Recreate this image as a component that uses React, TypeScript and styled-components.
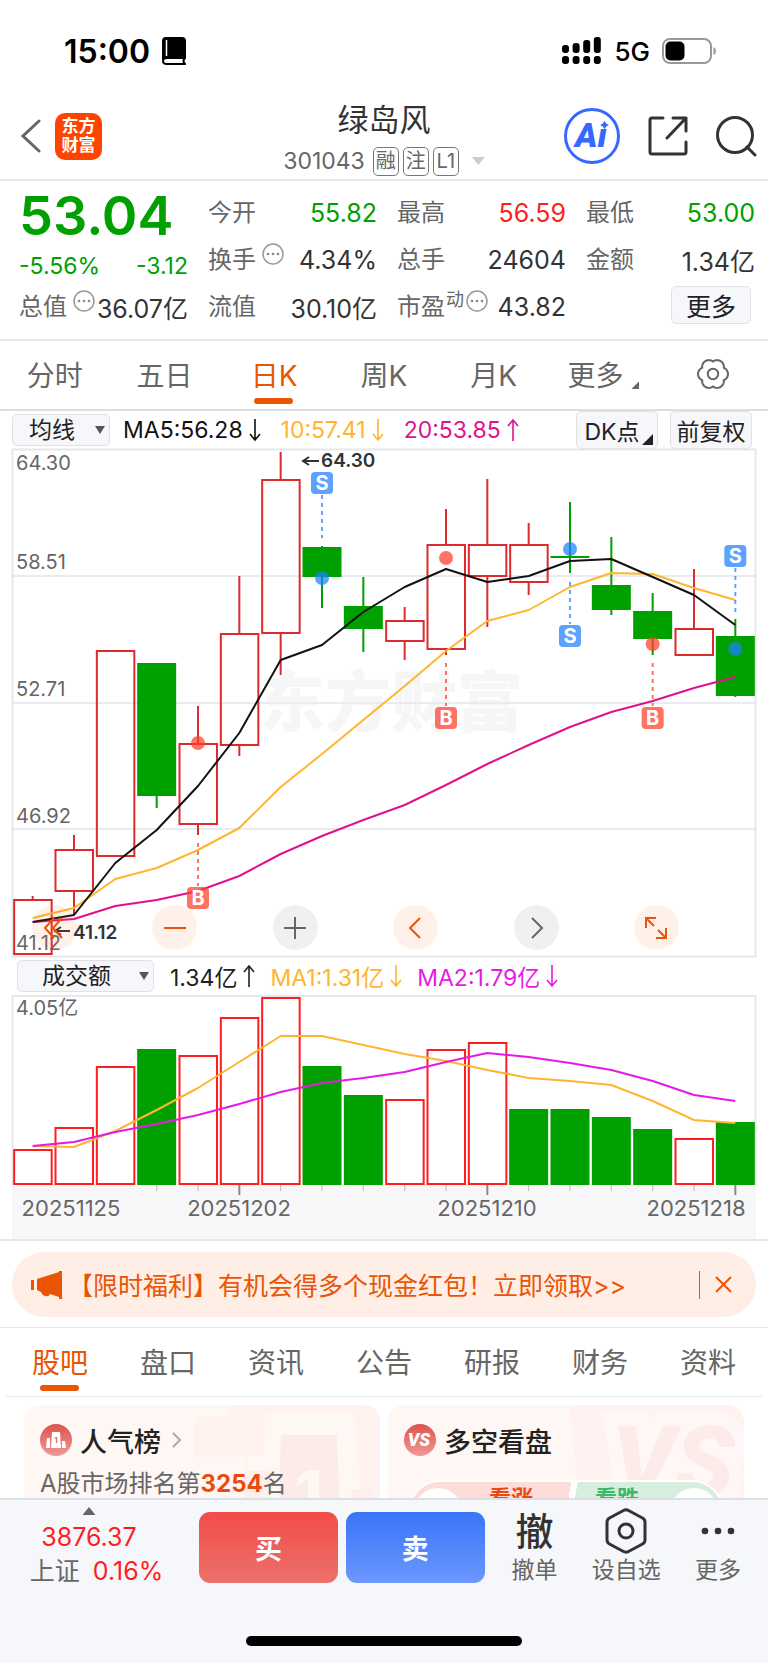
import React from 'react';
import styled, { createGlobalStyle, css } from 'styled-components';

const C = {
  orange: '#ea5504',
  green: '#00a000',
  red: '#ff1e1e',
  candle: '#dc2a2d',
  volume: '#ff1e1e',
  ink: '#222',
  dark: '#333',
  gray: '#666',
  line: '#e6e7ea',
  panel: '#f6f7fa',
  amber: '#ffb52e',
  pink: '#e0128a',
  magenta: '#e61ae6',
  sell: '#1e80ff',
  buy: '#ff3e28',
};

const GlobalStyle = createGlobalStyle`
  * { box-sizing: border-box; }
  body {
    margin: 0;
    background: #fff;
    color: ${C.dark};
    font-family: Inter, "Noto Sans CJK SC", sans-serif;
  }
  button, select { font: inherit; color: inherit; margin: 0; padding: 0; }
  button { border: 0; background: none; cursor: pointer; }
  a { color: inherit; text-decoration: none; }
  svg { display: block; }
  h1, h2, p, dl, dd, dt { margin: 0; font-weight: 400; }
`;

const Screen = styled.div`
  display: flex;
  flex-direction: column;
  height: 100vh;
`;

const Content = styled.main`
  flex: 1;
  min-height: 0;
  overflow: hidden;
`;

/* ---------- status bar ---------- */

const StatusBar = styled.div`
  display: flex;
  align-items: center;
  justify-content: space-between;
  height: 92px;
  padding: 10px 51px 0 64px;
  color: #000;
`;

const StatusGroup = styled.div<{ $size: number; $weight: number }>`
  display: flex;
  align-items: center;
  gap: 12px;
  font-size: ${(p) => p.$size}px;
  font-weight: ${(p) => p.$weight};
`;

/* ---------- header ---------- */

const Header = styled.header`
  display: grid;
  grid-template-columns: 1fr auto 1fr;
  align-items: center;
  height: 89px;
  padding: 0 11px;
  border-bottom: 2px solid ${C.line};
`;

const HeaderSide = styled.div<{ $end?: boolean }>`
  display: flex;
  align-items: center;
  gap: ${(p) => (p.$end ? 28 : 13)}px;
  padding-left: ${(p) => (p.$end ? 0 : 9)}px;
  justify-content: ${(p) => (p.$end ? 'flex-end' : 'flex-start')};
`;

const Logo = styled.a`
  display: grid;
  place-content: center;
  width: 47px;
  height: 47px;
  border-radius: 10px;
  background: #ff4400;
  color: #fff;
  font-size: 17px;
  font-weight: 700;
  line-height: 19px;
`;

const TitleBlock = styled.div`
  display: flex;
  flex-direction: column;
  align-items: center;
  padding-top: 6px;
`;

const StockName = styled.h1`
  font-size: 31px;
  line-height: 44px;
`;

const CodeLine = styled.div`
  display: flex;
  align-items: center;
  gap: 4px;
  height: 38px;
  font-size: 23px;
  color: ${C.gray};
`;

const Code = styled.span`
  margin-right: 4px;
`;

const Badge = styled.span`
  width: 26px;
  height: 29px;
  border: 1px solid #777;
  border-radius: 5px;
  font-size: 20px;
  line-height: 27px;
  text-align: center;
`;

const Triangle = styled.i<{ $dir: 'down' | 'up' | 'corner'; $size: number; $color: string }>`
  flex: none;
  width: ${(p) => p.$size}px;
  height: ${(p) => (p.$dir === 'corner' ? p.$size : Math.round(p.$size * 0.6))}px;
  background: ${(p) => p.$color};
  clip-path: ${(p) =>
    p.$dir === 'down'
      ? 'polygon(0 0, 100% 0, 50% 100%)'
      : p.$dir === 'up'
        ? 'polygon(50% 0, 100% 100%, 0 100%)'
        : 'polygon(100% 0, 100% 100%, 0 100%)'};
`;

const CodeTriangle = styled(Triangle)`
  margin-left: 9px;
`;

/* ---------- quote panel ---------- */

const Quote = styled.section`
  display: grid;
  grid-template-columns: repeat(4, 1fr);
  column-gap: 20px;
  height: 160px;
  padding: 8px 13px 0 19px;
  border-bottom: 2px solid ${C.line};
`;

const QuoteColumn = styled.dl`
  display: flex;
  flex-direction: column;
`;

const Price = styled.dd`
  color: ${C.green};
  font-size: 54px;
  font-weight: 600;
  line-height: 54px;
`;

const Change = styled.dd`
  display: flex;
  align-items: flex-end;
  justify-content: space-between;
  height: 40px;
  color: ${C.green};
  font-size: 23px;
  line-height: 34px;
`;

const QuoteCell = styled.div`
  display: flex;
  align-items: center;
  justify-content: space-between;
  height: 47px;
  white-space: nowrap;
`;

const QuoteLabel = styled.dt`
  display: flex;
  align-items: flex-start;
  gap: 6px;
  color: ${C.gray};
  font-size: 24px;
  line-height: 34px;
`;

const Sup = styled.sup`
  margin: 0 -4px 0 -5px;
  font-size: 18px;
  line-height: 20px;
`;

const QuoteValue = styled.dd<{ $color?: string }>`
  color: ${(p) => p.$color ?? C.dark};
  font-size: 25px;
`;

const SoftButton = styled.button`
  display: flex;
  align-items: center;
  justify-content: center;
  height: 38px;
  border: 1px solid #dfe1e6;
  border-radius: 5px;
  background: ${C.panel};
  color: ${C.ink};
  font-size: 23px;
  white-space: nowrap;
`;

const MoreButton = styled(SoftButton)`
  width: 80px;
  margin: 3px 4px 0 auto;
  font-size: 25px;
`;

/* ---------- tabs ---------- */

const Tabs = styled.nav<{ $tall?: boolean }>`
  display: grid;
  grid-template-columns: repeat(7, 1fr);
  height: ${(p) => (p.$tall ? 70 : 69)}px;
  margin: ${(p) => (p.$tall ? '0' : '0 6px')};
  border-bottom: ${(p) => (p.$tall ? 2 : 1)}px solid ${(p) => (p.$tall ? '#dcdee3' : C.line)};
`;

const Tab = styled.button<{ $active?: boolean }>`
  position: relative;
  display: flex;
  align-items: center;
  justify-content: center;
  gap: 8px;
  padding-bottom: 2px;
  color: ${(p) => (p.$active ? C.orange : C.gray)};
  font-size: 28px;
  white-space: nowrap;
  ${(p) =>
    p.$active &&
    css`
      &::after {
        content: '';
        position: absolute;
        left: 50%;
        bottom: 5px;
        width: 39px;
        height: 6px;
        margin-left: -20px;
        border-radius: 3px;
        background: ${C.orange};
      }
    `}
`;

const TabTriangle = styled(Triangle)`
  align-self: flex-end;
  margin-bottom: 18px;
`;

/* ---------- indicators ---------- */

const IndicatorRow = styled.div`
  display: flex;
  align-items: center;
  gap: 13px;
  height: 38px;
  padding: 0 16px 0 12px;
  font-size: 23px;
  white-space: nowrap;
`;

const VolumeRow = styled(IndicatorRow)`
  gap: 16px;
  padding-left: 17px;
`;

const SelectBox = styled.div<{ $width: number }>`
  position: relative;
  width: ${(p) => p.$width}px;
  height: 32px;
  select {
    appearance: none;
    width: 100%;
    height: 100%;
    padding: 0 18px 0 0;
    border: 1px solid #dfe1e6;
    border-radius: 5px;
    background: ${C.panel};
    color: ${C.ink};
    font-size: 23px;
    line-height: 28px;
    text-align: center;
    text-align-last: center;
  }
`;

const SelectTriangle = styled(Triangle)`
  position: absolute;
  right: 5px;
  top: 12px;
  height: 8px;
`;

const Legends = styled.div<{ $gap: number }>`
  display: flex;
  gap: ${(p) => p.$gap}px;
`;

const Legend = styled.span<{ $color: string }>`
  display: flex;
  align-items: center;
  gap: 6px;
  color: ${(p) => p.$color};
`;

const ButtonPair = styled.div`
  display: flex;
  gap: 12px;
  margin-left: auto;
  button { width: 82px; }
`;

const DkButton = styled(SoftButton)`
  position: relative;
  padding-right: 10px;
`;

const DkTriangle = styled(Triangle)`
  position: absolute;
  right: 4px;
  bottom: 3px;
`;

/* ---------- charts ---------- */

const ChartFrame = styled.div`
  position: relative;
  margin: 0 12px;
  background: #fff;
  > svg { width: 100%; height: auto; overflow: visible; }
`;

const ChartTools = styled.div`
  position: absolute;
  left: 0;
  right: 0;
  bottom: 7px;
  display: flex;
  justify-content: space-between;
  padding: 0 77px 0 20px;
`;

const Tool = styled.button<{ $muted?: boolean }>`
  display: grid;
  place-items: center;
  width: 45px;
  height: 45px;
  border-radius: 50%;
  background: ${(p) => (p.$muted ? 'rgba(0,0,0,.06)' : 'rgba(255,100,20,.09)')};
  color: ${(p) => (p.$muted ? C.gray : C.orange)};
  svg { width: 24px; height: 24px; }
`;

/* ---------- banner ---------- */

const BannerArea = styled.section`
  padding: 11px 12px 10px;
  border-top: 2px solid ${C.line};
  border-bottom: 1px solid ${C.line};
`;

const Banner = styled.div`
  display: flex;
  align-items: center;
  height: 65px;
  padding: 0 17px 0 19px;
  border-radius: 33px;
  background: #feeee6;
  color: ${C.orange};
  font-size: 25px;
`;

const BannerLink = styled.a`
  flex: 1;
  margin-left: 6px;
  padding-bottom: 2px;
  white-space: nowrap;
`;

const CloseButton = styled.button`
  display: flex;
  align-items: center;
  height: 28px;
  padding: 0 7px 0 15px;
  border-left: 1px solid ${C.orange};
`;

/* ---------- cards ---------- */

const Cards = styled.section`
  display: grid;
  grid-template-columns: 1fr 1fr;
  gap: 8px;
  padding: 8px 24px 24px;
`;

const Card = styled.article`
  position: relative;
  height: 200px;
  padding: 15px 16px;
  border-radius: 16px;
  overflow: hidden;
  background: #fff7f4;
`;

const CardArt = styled.svg`
  position: absolute;
  right: 0;
  top: 0;
`;

const CardHead = styled.h2`
  position: relative;
  display: flex;
  align-items: center;
  gap: 8px;
  height: 40px;
  color: ${C.ink};
  font-size: 27px;
  font-weight: 500;
`;

const RankLine = styled.p`
  position: relative;
  color: ${C.gray};
  font-size: 24px;
  line-height: 48px;
  b { color: #ea4a12; font-weight: 700; }
`;

const Versus = styled.div`
  position: relative;
  display: grid;
  grid-template-columns: 1fr 1fr;
  height: 64px;
  margin: 20px 4px;
  border: 2px solid #fff;
  border-radius: 32px;
  overflow: hidden;
  background: linear-gradient(100deg, #fddcda 50%, #fff 50%, #fff 52%, #d6efdc 52%);
  font-size: 22px;
  font-weight: 700;
  line-height: 32px;
`;

const Side = styled.button<{ $color: string; $end?: boolean }>`
  position: relative;
  color: ${(p) => p.$color};
  text-align: ${(p) => (p.$end ? 'left' : 'right')};
  padding: ${(p) => (p.$end ? '0 0 28px 29px' : '0 33px 28px 0')};
  &::before {
    content: '';
    position: absolute;
    top: 6px;
    ${(p) => (p.$end ? 'right' : 'left')}: 4px;
    width: 48px;
    height: 48px;
    border-radius: 50%;
    background: #fff;
  }
`;

/* ---------- bottom bar ---------- */

const BottomBar = styled.footer`
  border-top: 2px solid #dcdfe4;
  background: ${C.panel};
`;

const Actions = styled.div`
  display: flex;
  gap: 8px;
  height: 94px;
`;

const IndexBlock = styled.a`
  flex: 0 0 191px;
  display: flex;
  flex-direction: column;
  align-items: center;
  padding: 7px 13px 0 0;
  color: ${C.red};
  font-size: 25px;
  line-height: 34px;
  white-space: nowrap;
`;

const IndexTriangle = styled(Triangle)`
  margin-bottom: 5px;
`;

const IndexLine = styled.span`
  display: flex;
  gap: 13px;
  padding-left: 15px;
  span { color: ${C.gray}; }
`;

const TradeButton = styled.button<{ $from: string; $to: string }>`
  flex: 139;
  height: 71px;
  margin-top: 12px;
  border-radius: 11px;
  background: linear-gradient(${(p) => p.$from}, ${(p) => p.$to});
  color: #fff;
  font-size: 27px;
  font-weight: 700;
`;

const Shortcuts = styled.div`
  flex: 276;
  display: grid;
  grid-template-columns: repeat(3, 1fr);
`;

const Shortcut = styled.button`
  display: flex;
  flex-direction: column;
  align-items: center;
  padding-top: 7px;
  padding-right: 8px;
  color: ${C.gray};
  font-size: 23px;
  line-height: 32px;
  white-space: nowrap;
`;

const ShortcutIcon = styled.span`
  display: grid;
  place-items: center;
  height: 47px;
  color: ${C.dark};
  font-size: 38px;
  font-weight: 500;
`;

const HomeIndicator = styled.div`
  width: 36%;
  height: 10px;
  margin: 42px auto 17px;
  border-radius: 5px;
  background: #000;
`;

/* ---------- chart data ---------- */

const STEP = 744 / 18;
const cx = (i: number) => STEP * (i + 0.5);

type Candle = [top: number, bottom: number, high: number, low: number, up: boolean];
const candles: Candle[] = [
  [450, 506, 447, 506, true],
  [400, 443, 386, 466, true],
  [201, 408, 201, 408, true],
  [214, 347, 214, 359, false],
  [294, 376, 257, 386, true],
  [184, 297, 127, 307, true],
  [30, 185, 3, 226, true],
  [98, 128, 97, 159, false],
  [157, 180, 128, 203, false],
  [171, 193, 158, 211, true],
  [95, 201, 60, 206, true],
  [95, 128, 30, 178, true],
  [95, 134, 74, 146, true],
  [107, 109, 53, 124, false],
  [136, 161, 88, 166, false],
  [162, 190, 144, 206, false],
  [179, 207, 120, 207, true],
  [187, 247, 170, 248, false],
];
const ma5 = [473, 466, 414, 381, 337, 284, 211, 196, 163, 138, 120, 133, 127, 112, 110, 128, 146, 176];
const ma10 = [469, 459, 430, 419, 401, 379, 338, 305, 271, 237, 202, 172, 161, 138, 124, 125, 139, 151];
const ma20 = [473, 470, 457, 451, 442, 427, 405, 387, 371, 356, 336, 315, 296, 278, 263, 252, 239, 228];

const signals = [
  { i: 4, kind: 'B', badge: 449, from: 394, to: 437, dot: 294 },
  { i: 7, kind: 'S', badge: 34, from: 46, to: 89, dot: 129 },
  { i: 10, kind: 'B', badge: 269, from: 214, to: 257, dot: 109 },
  { i: 13, kind: 'S', badge: 187, from: 133, to: 175, dot: 100 },
  { i: 15, kind: 'B', badge: 269, from: 214, to: 257, dot: 195 },
  { i: 17, kind: 'S', badge: 107, from: 119, to: 163, dot: 200 },
];

const volumes = [154, 132, 71, 54, 60, 22, 2, 71, 100, 104, 54, 47, 114, 114, 122, 134, 143, 127];
const fallingVolume = new Set([3, 7, 8, 12, 13, 14, 15, 17]);
const vma1 = [151, 152, 136, 115, 93, 67, 41, 41, 50, 59, 66, 75, 83, 86, 90, 106, 125, 128];
const vma2 = [151, 147, 137, 129, 120, 109, 97, 88, 83, 77, 67, 58, 62, 68, 75, 86, 100, 106];

const points = (ys: number[]) => ys.map((y, i) => `${cx(i).toFixed(1)},${y}`).join(' ');

const Line = ({ ys, color }: { ys: number[]; color: string }) => (
  <polyline points={points(ys)} fill="none" stroke={color} strokeWidth={2} strokeLinejoin="round" />
);

const PriceChart = () => (
  <svg viewBox="0 0 744 508" role="img" aria-label="日K线图">
    <text x="379" y="277" fontSize="66" fontWeight="900" fill="#f6f6f7" textAnchor="middle">东方财富</text>
    {[127, 254, 380].map((y) => (
      <path key={y} d={`M0 ${y}H744`} stroke="#e9ebf1" strokeWidth="2" />
    ))}
    <rect x="0.5" y="0.5" width="743" height="507" fill="none" stroke={C.line} strokeWidth="2" />
    {[['64.30', 21], ['58.51', 120], ['52.71', 247], ['46.92', 374], ['41.12', 501]].map(([t, y]) => (
      <text key={t} x="4" y={y} fontSize="20" fill={C.gray}>{t}</text>
    ))}
    {candles.map(([top, bottom, high, low, up], i) => {
      const color = up ? C.candle : C.green;
      return (
        <g key={i} stroke={color} strokeWidth="2">
          <path d={`M${cx(i)} ${high}V${top}M${cx(i)} ${bottom}V${low}`} />
          {up ? (
            <rect x={cx(i) - 18.5} y={top + 1} width="37.5" height={bottom - top - 2} fill="none" />
          ) : (
            <rect x={cx(i) - 19.5} y={top} width="39" height={bottom - top} fill={color} stroke="none" />
          )}
        </g>
      );
    })}
    <Line ys={ma20} color={C.pink} />
    <Line ys={ma10} color={C.amber} />
    <Line ys={ma5} color="#111" />
    {signals.map((s) => {
      const color = s.kind === 'S' ? C.sell : C.buy;
      const x = cx(s.i);
      return (
        <g key={s.i}>
          <g opacity="0.72">
            <path d={`M${x} ${s.from}V${s.to}`} stroke={color} strokeWidth="2" strokeDasharray="4 4" />
            <circle cx={x} cy={s.dot} r="7" fill={color} />
            <rect x={x - 11} y={s.badge - 11} width="22" height="22" rx="4" fill={color} />
          </g>
          <text x={x} y={s.badge + 7} fontSize="20" fontWeight="700" fill="#fff" textAnchor="middle">{s.kind}</text>
        </g>
      );
    })}
    <path d="M291 12H307M297 8L291 12L297 16" fill="none" stroke={C.dark} strokeWidth="2" />
    <text x="309" y="18" fontSize="19" fontWeight="600" fill={C.dark}>64.30</text>
    <path d="M43 482H58M49 478L43 482L49 486" fill="none" stroke={C.dark} strokeWidth="2" />
    <text x="61" y="490" fontSize="19" fontWeight="600" fill={C.dark}>41.12</text>
  </svg>
);

const VolumeChart = () => (
  <svg viewBox="0 0 744 244" role="img" aria-label="成交额图">
    <rect x="0" y="190" width="744" height="54" fill="#f7f7fa" />
    <path d="M0.5 190V1H743.5V190" fill="none" stroke={C.line} strokeWidth="2" />
    <text x="4" y="20" fontSize="20" fill={C.gray}>4.05亿</text>
    {volumes.map((top, i) =>
      fallingVolume.has(i) ? (
        <rect key={i} x={cx(i) - 19.5} y={top} width="39" height={190 - top} fill={C.green} />
      ) : (
        <rect key={i} x={cx(i) - 18.5} y={top + 1} width="37.5" height={188 - top} fill="none" stroke={C.volume} strokeWidth="2" />
      ),
    )}
    <Line ys={vma1} color={C.amber} />
    <Line ys={vma2} color={C.magenta} />
    {volumes.map((_, i) => {
      const major = i % 6 === 5;
      return i < 3 ? null : (
        <path key={i} d={`M${cx(i)} 190V${major ? 200 : 196}`} stroke={major ? '#888' : '#bbb'} strokeWidth={major ? 2 : 1} />
      );
    })}
    {[['20251125', 59], ['20251202', 227], ['20251210', 475], ['20251218', 684]].map(([t, x]) => (
      <text key={t} x={x} y="221" fontSize="22" fill={C.gray} textAnchor="middle">{t}</text>
    ))}
  </svg>
);

/* ---------- icons ---------- */

const Arrow = ({ up }: { up?: boolean }) => (
  <svg width="12" height="24" viewBox="0 0 12 24" fill="none" stroke="currentColor" strokeWidth="1.6">
    {up ? <path d="M6 23V2M1 8L6 2L11 8" /> : <path d="M6 1V22M1 16L6 22L11 16" />}
  </svg>
);

const Info = () => (
  <svg width="22" height="22" viewBox="0 0 22 22" aria-hidden="true">
    <circle cx="11" cy="11" r="10" fill="none" stroke="#999" strokeWidth="1.5" />
    <g fill="#888">
      <circle cx="6" cy="11" r="1.3" />
      <circle cx="11" cy="11" r="1.3" />
      <circle cx="16" cy="11" r="1.3" />
    </g>
  </svg>
);

const gearPath = (() => {
  const pts: string[] = [];
  for (let a = 0; a < 360; a += 5) {
    const t = (a * Math.PI) / 180;
    const r = 12.4 + 2.6 * Math.pow(Math.abs(Math.cos(3 * t)), 0.8);
    pts.push(`${(16 + r * Math.cos(t)).toFixed(2)} ${(16 + r * Math.sin(t)).toFixed(2)}`);
  }
  return `M${pts.join('L')}Z`;
})();

const Gear = () => (
  <svg width="32" height="32" viewBox="0 0 32 32" fill="none" stroke={C.gray} strokeWidth="2">
    <path d={gearPath} strokeLinejoin="round" />
    <circle cx="16" cy="16" r="5.2" />
  </svg>
);

const signalBars = [8, 10, 13, 16];

const App = () => (
  <>
    <GlobalStyle />
    <Screen>
      <Content>
        <StatusBar>
          <StatusGroup $size={32} $weight={600}>
            15:00
            <svg width="24" height="28" viewBox="0 0 24 28">
              <path d="M4 0H20Q24 0 24 4V21H5Q0 21 0 24V4Q0 0 4 0Z" />
              <path d="M4.500 3V19" stroke="#fff" strokeWidth="1.500" />
              <path d="M23 21H5Q1 21 1 24T5 27H23Q20 24 23 21Z" fill="#fff" stroke="#000" strokeWidth="2" />
            </svg>
          </StatusGroup>
          <StatusGroup $size={26} $weight={500}>
            <svg width="40" height="28" viewBox="0 0 40 28">
              {signalBars.map((h, i) => (
                <g key={h}>
                  <rect x={i * 10.6} y={16 - h} width="7" height={h} rx="3" />
                  <rect x={i * 10.6} y="19" width="7" height="8" rx="3" />
                </g>
              ))}
            </svg>
            5G
            <svg width="55" height="26" viewBox="0 0 55 26">
              <rect x="1" y="1" width="48" height="24" rx="7" fill="none" stroke="#999" strokeWidth="2" />
              <rect x="3.500" y="3.500" width="19" height="19" rx="5" />
              <path d="M51.500 9V17Q54 16 54 13T51.500 9Z" fill="#999" />
            </svg>
          </StatusGroup>
        </StatusBar>

        <Header>
          <HeaderSide>
            <button aria-label="返回">
              <svg width="22" height="34" viewBox="0 0 22 34" fill="none" stroke={C.gray} strokeWidth="3" strokeLinecap="round">
                <path d="M19 2L3 17L19 32" />
              </svg>
            </button>
            <Logo href="#home">
              <span>东方</span>
              <span>财富</span>
            </Logo>
          </HeaderSide>
          <TitleBlock>
            <StockName>绿岛风</StockName>
            <CodeLine>
              <Code>301043</Code>
              <Badge>融</Badge>
              <Badge>注</Badge>
              <Badge>L1</Badge>
              <CodeTriangle $dir="down" $size={13} $color="#ccc" />
            </CodeLine>
          </TitleBlock>
          <HeaderSide $end>
            <button aria-label="智能助手">
              <svg width="56" height="56" viewBox="0 0 56 56">
                <circle cx="28" cy="28" r="26.500" fill="none" stroke="#3668ff" strokeWidth="3" />
                <text x="11" y="39" fontFamily="Roboto" fontSize="34" fontWeight="900" fontStyle="italic" fill="#3668ff">Aı</text>
                <path d="M40.500 12.500Q41.500 16 45 17Q41.500 18 40.500 21.500Q39.500 18 36 17Q39.500 16 40.500 12.500Z" fill="#3668ff" />
              </svg>
            </button>
            <button aria-label="分享">
              <svg width="40" height="40" viewBox="0 0 40 40" fill="none" stroke={C.dark} strokeWidth="3" strokeLinecap="round" strokeLinejoin="round">
                <path d="M15 2H4Q2 2 2 4V36Q2 38 4 38H36Q38 38 38 36V26" />
                <path d="M25 2H38V15M38 2L19 22" />
              </svg>
            </button>
            <button aria-label="搜索">
              <svg width="41" height="41" viewBox="0 0 41 41" fill="none" stroke={C.dark} strokeWidth="3" strokeLinecap="round">
                <circle cx="19" cy="19" r="17.500" />
                <path d="M31 31L39 39" />
              </svg>
            </button>
          </HeaderSide>
        </Header>

        <Quote>
          <QuoteColumn>
            <Price>53.04</Price>
            <Change>
              <span>-5.56%</span>
              <span>-3.12</span>
            </Change>
            <QuoteCell>
              <QuoteLabel>总值<Info /></QuoteLabel>
              <QuoteValue>36.07亿</QuoteValue>
            </QuoteCell>
          </QuoteColumn>
          <QuoteColumn>
            <QuoteCell>
              <QuoteLabel>今开</QuoteLabel>
              <QuoteValue $color={C.green}>55.82</QuoteValue>
            </QuoteCell>
            <QuoteCell>
              <QuoteLabel>换手<Info /></QuoteLabel>
              <QuoteValue>4.34%</QuoteValue>
            </QuoteCell>
            <QuoteCell>
              <QuoteLabel>流值</QuoteLabel>
              <QuoteValue>30.10亿</QuoteValue>
            </QuoteCell>
          </QuoteColumn>
          <QuoteColumn>
            <QuoteCell>
              <QuoteLabel>最高</QuoteLabel>
              <QuoteValue $color={C.red}>56.59</QuoteValue>
            </QuoteCell>
            <QuoteCell>
              <QuoteLabel>总手</QuoteLabel>
              <QuoteValue>24604</QuoteValue>
            </QuoteCell>
            <QuoteCell>
              <QuoteLabel>市盈<Sup>动</Sup><Info /></QuoteLabel>
              <QuoteValue>43.82</QuoteValue>
            </QuoteCell>
          </QuoteColumn>
          <QuoteColumn as="div">
            <QuoteCell>
              <QuoteLabel as="span">最低</QuoteLabel>
              <QuoteValue as="span" $color={C.green}>53.00</QuoteValue>
            </QuoteCell>
            <QuoteCell>
              <QuoteLabel as="span">金额</QuoteLabel>
              <QuoteValue as="span">1.34亿</QuoteValue>
            </QuoteCell>
            <MoreButton>更多</MoreButton>
          </QuoteColumn>
        </Quote>

        <Tabs $tall>
          <Tab>分时</Tab>
          <Tab>五日</Tab>
          <Tab $active>日K</Tab>
          <Tab>周K</Tab>
          <Tab>月K</Tab>
          <Tab>
            更多
            <TabTriangle $dir="corner" $size={8} $color={C.gray} />
          </Tab>
          <Tab aria-label="设置"><Gear /></Tab>
        </Tabs>

        <IndicatorRow>
          <SelectBox $width={98}>
            <select aria-label="主图指标"><option>均线</option></select>
            <SelectTriangle $dir="down" $size={10} $color="#555" />
          </SelectBox>
          <Legends $gap={20}>
            <Legend $color="#111">MA5:56.28<Arrow /></Legend>
            <Legend $color={C.amber}>10:57.41<Arrow /></Legend>
            <Legend $color={C.pink}>20:53.85<Arrow up /></Legend>
          </Legends>
          <ButtonPair>
            <DkButton>DK点<DkTriangle $dir="corner" $size={11} $color={C.ink} /></DkButton>
            <SoftButton>前复权</SoftButton>
          </ButtonPair>
        </IndicatorRow>

        <ChartFrame>
          <PriceChart />
          <ChartTools>
            <Tool aria-label="快退">
              <svg viewBox="0 0 24 24" fill="none" stroke="currentColor" strokeWidth="2">
                <path d="M11 2L2 12L11 22M19 2L10 12L19 22" />
              </svg>
            </Tool>
            <Tool aria-label="缩小">
              <svg viewBox="0 0 24 24" stroke="currentColor" strokeWidth="2"><path d="M1 12H23" /></svg>
            </Tool>
            <Tool $muted aria-label="放大">
              <svg viewBox="0 0 24 24" stroke="currentColor" strokeWidth="2"><path d="M1 12H23M12 1V23" /></svg>
            </Tool>
            <Tool aria-label="左移">
              <svg viewBox="0 0 24 24" fill="none" stroke="currentColor" strokeWidth="2"><path d="M16 2L6 12L16 22" /></svg>
            </Tool>
            <Tool $muted aria-label="右移">
              <svg viewBox="0 0 24 24" fill="none" stroke="currentColor" strokeWidth="2"><path d="M8 2L18 12L8 22" /></svg>
            </Tool>
            <Tool aria-label="全屏">
              <svg viewBox="0 0 24 24" fill="none" stroke="currentColor" strokeWidth="2">
                <path d="M2 12V2H12M2 2L10 10M22 12V22H12M22 22L14 14" />
              </svg>
            </Tool>
          </ChartTools>
        </ChartFrame>

        <VolumeRow>
          <SelectBox $width={137}>
            <select aria-label="副图指标"><option>成交额</option></select>
            <SelectTriangle $dir="down" $size={10} $color="#555" />
          </SelectBox>
          <Legends $gap={15}>
            <Legend $color={C.ink}>1.34亿<Arrow up /></Legend>
            <Legend $color={C.amber}>MA1:1.31亿<Arrow /></Legend>
            <Legend $color={C.magenta}>MA2:1.79亿<Arrow /></Legend>
          </Legends>
        </VolumeRow>

        <ChartFrame>
          <VolumeChart />
        </ChartFrame>

        <BannerArea>
          <Banner>
            <svg width="31" height="28" viewBox="0 0 31 28" fill={C.orange} aria-hidden="true">
              <path d="M0 9H3V19H0Z" />
              <path d="M6 8L28 1V0H31V28H28V26L19 23Q18 26 14 25Q11 24 10 21L6 19Z" />
            </svg>
            <BannerLink href="#gift">【限时福利】有机会得多个现金红包！立即领取&gt;&gt;</BannerLink>
            <CloseButton aria-label="关闭">
              <svg width="17" height="17" viewBox="0 0 17 17" stroke={C.orange} strokeWidth="2">
                <path d="M1 1L16 16M16 1L1 16" />
              </svg>
            </CloseButton>
          </Banner>
        </BannerArea>

        <Tabs>
          {['股吧', '盘口', '资讯', '公告', '研报', '财务', '资料'].map((t, i) => (
            <Tab key={t} $active={i === 0}>{t}</Tab>
          ))}
        </Tabs>

        <Cards>
          <Card>
            <CardArt width="190" height="120" viewBox="0 0 190 120">
              <path d="M4 12H36L40 0H190V120H54V52H4Z" fill="#fff2ef" />
              <path d="M76 8H164L172 92H184V120H58V50H72Z" fill="#fff7f4" />
              <path d="M91 30H147L150 120H88Z" fill="#fdebe8" />
              <path d="M55 66H80V120H52ZM162 84H184V120H160Z" fill="#fdefec" />
              <text x="105" y="110" fontSize="62" fontWeight="800" fill="#fff7f4">1</text>
            </CardArt>
            <CardHead>
              <svg width="32" height="32" viewBox="0 0 32 32">
                <defs>
                  <linearGradient id="disc" x1="0" y1="0" x2="0" y2="1">
                    <stop offset="0" stopColor="#dc524e" />
                    <stop offset="1" stopColor="#f09a95" />
                  </linearGradient>
                </defs>
                <circle cx="16" cy="16" r="16" fill="url(#disc)" />
                <path d="M7 14H10V24H6ZM12 8H20L21 24H11ZM22 17H25L26 24H22Z" fill="#fff" />
                <text x="16" y="19" fontSize="8" fontWeight="700" fill="#dc6a66" textAnchor="middle">1</text>
              </svg>
              人气榜
              <svg width="14" height="16" viewBox="0 0 14 16" fill="none" stroke="#aaa" strokeWidth="2">
                <path d="M4 1L11 8L4 15" />
              </svg>
            </CardHead>
            <RankLine>A股市场排名第<b>3254</b>名</RankLine>
          </Card>
          <Card>
            <CardArt width="180" height="120" viewBox="0 0 180 120">
              <path d="M5 0H180V120H18Z" fill="#fff2f0" />
              <text x="48" y="91" fontFamily="Roboto" fontSize="98" fontWeight="900" fontStyle="italic" fill="#fdebea" stroke="#fff7f5" strokeWidth="28" paintOrder="stroke">VS</text>
            </CardArt>
            <CardHead>
              <svg width="32" height="32" viewBox="0 0 32 32">
                <circle cx="16" cy="16" r="16" fill="url(#disc)" />
                <text x="15" y="22" fontFamily="Roboto" fontSize="18" fontWeight="900" fontStyle="italic" fill="#fff" textAnchor="middle">VS</text>
              </svg>
              多空看盘
            </CardHead>
            <Versus>
              <Side $color="#ea4a12">看涨</Side>
              <Side $color="#3cb868" $end>看跌</Side>
            </Versus>
          </Card>
        </Cards>
      </Content>

      <BottomBar>
        <Actions>
          <IndexBlock href="#index">
            <IndexTriangle $dir="up" $size={13} $color={C.gray} />
            3876.37
            <IndexLine><span>上证</span>0.16%</IndexLine>
          </IndexBlock>
          <TradeButton $from="#f24c48" $to="#ec716c">买</TradeButton>
          <TradeButton $from="#3a74f8" $to="#6c98ff">卖</TradeButton>
          <Shortcuts>
            <Shortcut>
              <ShortcutIcon>撤</ShortcutIcon>
              撤单
            </Shortcut>
            <Shortcut>
              <ShortcutIcon>
                <svg width="42" height="46" viewBox="0 0 42 46" fill="none" stroke={C.dark} strokeWidth="3">
                  <path d="M18.500 2.500Q21 1.200 23.500 2.500L37.500 10Q40 11.500 40 14V32Q40 34.500 37.500 36L23.500 43.500Q21 44.800 18.500 43.500L4.500 36Q2 34.500 2 32V14Q2 11.500 4.500 10Z" />
                  <circle cx="21" cy="23" r="7" />
                </svg>
              </ShortcutIcon>
              设自选
            </Shortcut>
            <Shortcut>
              <ShortcutIcon>
                <svg width="34" height="8" viewBox="0 0 34 8" fill={C.dark}>
                  <circle cx="4" cy="4" r="3.300" />
                  <circle cx="17" cy="4" r="3.300" />
                  <circle cx="30" cy="4" r="3.300" />
                </svg>
              </ShortcutIcon>
              更多
            </Shortcut>
          </Shortcuts>
        </Actions>
        <HomeIndicator />
      </BottomBar>
    </Screen>
  </>
);

export default App;
